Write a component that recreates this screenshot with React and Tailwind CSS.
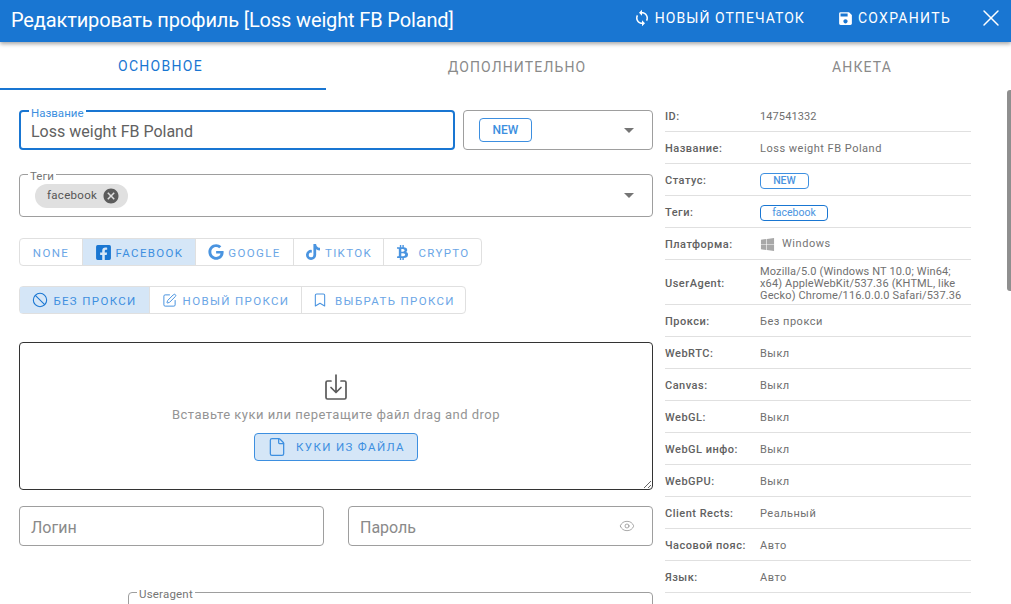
import React from "react";
import { Ban, SquarePen, Bookmark, File, Eye, X } from "lucide-react";
import { MdSync, MdSave, MdCancel } from "react-icons/md";
import { FaFacebookSquare, FaGoogle, FaTiktok, FaBtc, FaWindows } from "react-icons/fa";

const rows = [
  ["ID:", "147541332"],
  ["Название:", "Loss weight FB Poland"],
  ["Статус:", "status"],
  ["Теги:", "tag"],
  ["Платформа:", "platform"],
  ["UserAgent:", "ua"],
  ["Прокси:", "Без прокси"],
  ["WebRTC:", "Выкл"],
  ["Canvas:", "Выкл"],
  ["WebGL:", "Выкл"],
  ["WebGL инфо:", "Выкл"],
  ["WebGPU:", "Выкл"],
  ["Client Rects:", "Реальный"],
  ["Часовой пояс:", "Авто"],
  ["Язык:", "Авто"],
];

function Value({ v }) {
  if (v === "status")
    return <span className="-mt-[2px] flex h-[16px] w-[49px] items-center justify-center rounded-[4px] border border-[#3d8fe0] text-[10.5px] font-medium text-[#4a94e0]">NEW</span>;
  if (v === "tag")
    return <span className="-mt-[2px] flex h-[16px] w-[68px] items-center justify-center rounded-[4px] border border-[#1976d2] text-[10.5px] text-[#4a94e0]">facebook</span>;
  if (v === "platform")
    return (
      <span className="-mt-[2px] flex items-center gap-[7px] tracking-[0.55px] text-[#757575]">
        <FaWindows className="text-[15px] text-[#a8a8a8]" />
        <span>Windows</span>
      </span>
    );
  if (v === "ua")
    return <span className="block w-[206px] leading-[12px] tracking-[0.14px]">Mozilla/5.0 (Windows NT 10.0; Win64; x64) AppleWebKit/537.36 (KHTML, like Gecko) Chrome/116.0.0.0 Safari/537.36</span>;
  if (v === "147541332") return <span className="tracking-[0.1px]">{v}</span>;
  return <span className="tracking-[0.5px]">{v}</span>;
}

function Group({ items, active }) {
  return (
    <div className="flex h-[28px] w-fit rounded-[4px] border border-[#e0e0e0] text-[11.5px] tracking-[1.35px] text-[#6ba6e6]">
      {items.map((it, i) => (
        <div
          key={it.label}
          style={{ width: it.w }}
          className={
            "flex items-center justify-center " +
            (i > 0 ? "border-l border-[#e0e0e0] " : "") +
            (i === active ? "bg-[#d5e6f7] text-[#3d8fe0]" : "")
          }
        >
          {it.icon}
          <span className="pt-[3px]">{it.label}</span>
        </div>
      ))}
    </div>
  );
}

export default function App() {
  return (
    <div className="relative h-[604px] w-[1011px] overflow-hidden bg-white font-['Roboto',sans-serif] text-[#424242]">
      <header className="relative z-10 flex h-[42px] items-center justify-between bg-[#1976d2] pl-[11px] pr-[6px] text-white shadow-[0_2px_4px_rgba(0,0,0,0.35)]">
        <h1 className="pb-[2px] text-[20px] font-normal leading-none tracking-[-0.14px]">Редактировать профиль [Loss weight FB Poland]</h1>
        <div className="flex items-center pb-[6px] text-[14px]">
          <MdSync className="mr-[4px] text-[18px]" />
          <span className="mr-[32px] tracking-[1.05px]">НОВЫЙ ОТПЕЧАТОК</span>
          <MdSave className="mr-[4px] text-[17px]" />
          <span className="mr-[26px] tracking-[1.3px]">СОХРАНИТЬ</span>
          <X size={28} strokeWidth={1.25} className="my-[-6px]" />
        </div>
      </header>

      <nav className="flex h-[48px] text-[14px] tracking-[1.15px] text-[#8a8a8a]">
        <div className="flex w-[326px] items-center justify-center border-b-2 border-[#1976d2] pr-[5px] pt-[2px] tracking-[1.3px] text-[#1976d2]">ОСНОВНОЕ</div>
        <div className="flex w-[382px] items-center justify-center pt-[2px]">ДОПОЛНИТЕЛЬНО</div>
        <div className="flex flex-1 items-center justify-center pl-[5px] pt-[2px]">АНКЕТА</div>
      </nav>

      <main className="flex pl-[19px]">
        <section className="w-[634px] pt-[20px]">
          <div className="flex gap-[8px]">
            <div className="relative flex h-[40px] w-[436px] items-center rounded-[4px] border-2 border-[#1976d2] pl-[10px] pt-[3px] text-[16px] text-[#616161]">
              <span className="absolute left-[8px] top-[-5px] bg-white px-[2px] text-[11.5px] leading-[12px] text-[#3d8fe0]">Название</span>
              Loss weight FB Poland
            </div>
            <div className="flex h-[40px] flex-1 items-center justify-between rounded-[4px] border border-[#9e9e9e] pl-[15px] pr-[18px]">
              <span className="flex h-[24px] w-[53px] items-center justify-center rounded-[4px] border border-[#3d8fe0] text-[12px] font-medium text-[#3d8fe0]">NEW</span>
              <span className="h-0 w-0 border-x-[5px] border-t-[5px] border-x-transparent border-t-[#757575]" />
            </div>
          </div>

          <div className="relative mt-[24px] flex h-[43px] items-center justify-between rounded-[4px] border border-[#9e9e9e] pl-[15px] pr-[18px]">
            <span className="absolute left-[8px] top-[-5px] bg-white px-[2px] text-[11.5px] leading-[12px] text-[#757575]">Теги</span>
            <span className="flex h-[24px] w-[93px] items-center rounded-full bg-[#e0e0e0] pl-[12px] pr-[2px] text-[11.5px] tracking-[0.3px] text-[#555]">
              <span className="flex-1 pt-[1px]">facebook</span>
              <MdCancel className="mr-[6px] text-[18px] text-[#5c5c5c]" />
            </span>
            <span className="h-0 w-0 border-x-[5px] border-t-[5px] border-x-transparent border-t-[#757575]" />
          </div>

          <div className="mt-[21px]">
            <Group
              active={1}
              items={[
                { label: "NONE", w: 62 },
                { label: "FACEBOOK", w: 113, icon: <FaFacebookSquare className="mr-[4px] text-[17px] text-[#1976d2]" /> },
                { label: "GOOGLE", w: 98, icon: <FaGoogle className="mr-[4px] text-[16px] text-[#4a94e0]" /> },
                { label: "TIKTOK", w: 90, icon: <FaTiktok className="mr-[4px] text-[16px] text-[#4a94e0]" /> },
                { label: "CRYPTO", w: 98, icon: <FaBtc className="mr-[8px] text-[15px] text-[#4a94e0]" /> },
              ]}
            />
          </div>
          <div className="mt-[20px]">
            <Group
              active={0}
              items={[
                { label: "БЕЗ ПРОКСИ", w: 129, icon: <Ban size={16} strokeWidth={1.6} className="mr-[5px] text-[#1976d2]" /> },
                { label: "НОВЫЙ ПРОКСИ", w: 152, icon: <SquarePen size={15} strokeWidth={1.6} className="mr-[6px] text-[#4a94e0]" /> },
                { label: "ВЫБРАТЬ ПРОКСИ", w: 164, icon: <Bookmark size={16} strokeWidth={1.6} className="mr-[7px] text-[#4a94e0]" /> },
              ]}
            />
          </div>

          <div className="relative mt-[28px] flex h-[148px] flex-col items-center rounded-[4px] border-[1.5px] border-[#333] pt-[30px]">
            <svg width="24" height="28" viewBox="0 0 24 28" fill="none" stroke="#5a5a5a" strokeWidth="1.7" strokeLinecap="round" strokeLinejoin="round">
              <path d="M7 8H3.500A1.500 1.500 0 0 0 2 9.500v15A1.500 1.500 0 0 0 3.500 26h17a1.500 1.500 0 0 0 1.500-1.500v-15A1.500 1.500 0 0 0 20.500 8H17" />
              <path d="M12 2v17M7 14.500l5 5 5-5" />
            </svg>
            <p className="mt-[4px] text-[13px] tracking-[0.48px] text-[#949494]">Вставьте куки или перетащите файл drag and drop</p>
            <div className="mt-[8px] flex h-[28px] w-[164px] items-center justify-center rounded-[4px] border border-[#3d8fe0] bg-[#d5e6f7] text-[11.5px] tracking-[1.35px] text-[#3d8fe0]">
              <File size={20} strokeWidth={1.5} className="mr-[9px]" />
              <span className="pt-[3px]">КУКИ ИЗ ФАЙЛА</span>
            </div>
            <svg className="absolute bottom-0 right-0" width="10" height="10" viewBox="0 0 10 10" stroke="#666" strokeWidth="1">
              <path d="M2 9 9 2M6 9 9 6" />
            </svg>
          </div>

          <div className="mt-[16px] flex justify-between">
            <div className="flex h-[40px] w-[305px] items-center rounded-[4px] border border-[#9e9e9e] pl-[11px] pt-[3px] text-[16px] text-[#8a8a8a]">Логин</div>
            <div className="flex h-[40px] w-[305px] items-center justify-between rounded-[4px] border border-[#9e9e9e] pl-[11px] pr-[17px] text-[16px] text-[#8a8a8a]">
              <span className="pt-[3px]">Пароль</span>
              <Eye size={16} strokeWidth={1.1} className="text-[#8a8a8a]" />
            </div>
          </div>

          <div className="relative ml-[109px] mt-[46px] h-[60px] rounded-[4px] border border-[#9e9e9e]">
            <span className="absolute left-[8px] top-[-5px] bg-white px-[2px] text-[11.5px] leading-[12px] tracking-[0.2px] text-[#757575]">Useragent</span>
          </div>
        </section>

        <aside className="ml-[12px] w-[306px] pt-[10px] text-[11px]">
          {rows.map(([k, v]) => (
            <div key={k} className={"flex items-center border-b border-[#e0e0e0] pt-[4px] " + (v === "ua" ? "h-[45px]" : "h-[32px]")}>
              <span className="w-[95px] shrink-0 font-medium tracking-[0.5px] text-[#616161]">{k}</span>
              <div className="text-[#707070]"><Value v={v} /></div>
            </div>
          ))}
        </aside>
      </main>

      <div className="absolute right-0 top-[90px] h-[201px] w-[4px] rounded-l-[3px] bg-[#8f8f8f]" />
    </div>
  );
}
